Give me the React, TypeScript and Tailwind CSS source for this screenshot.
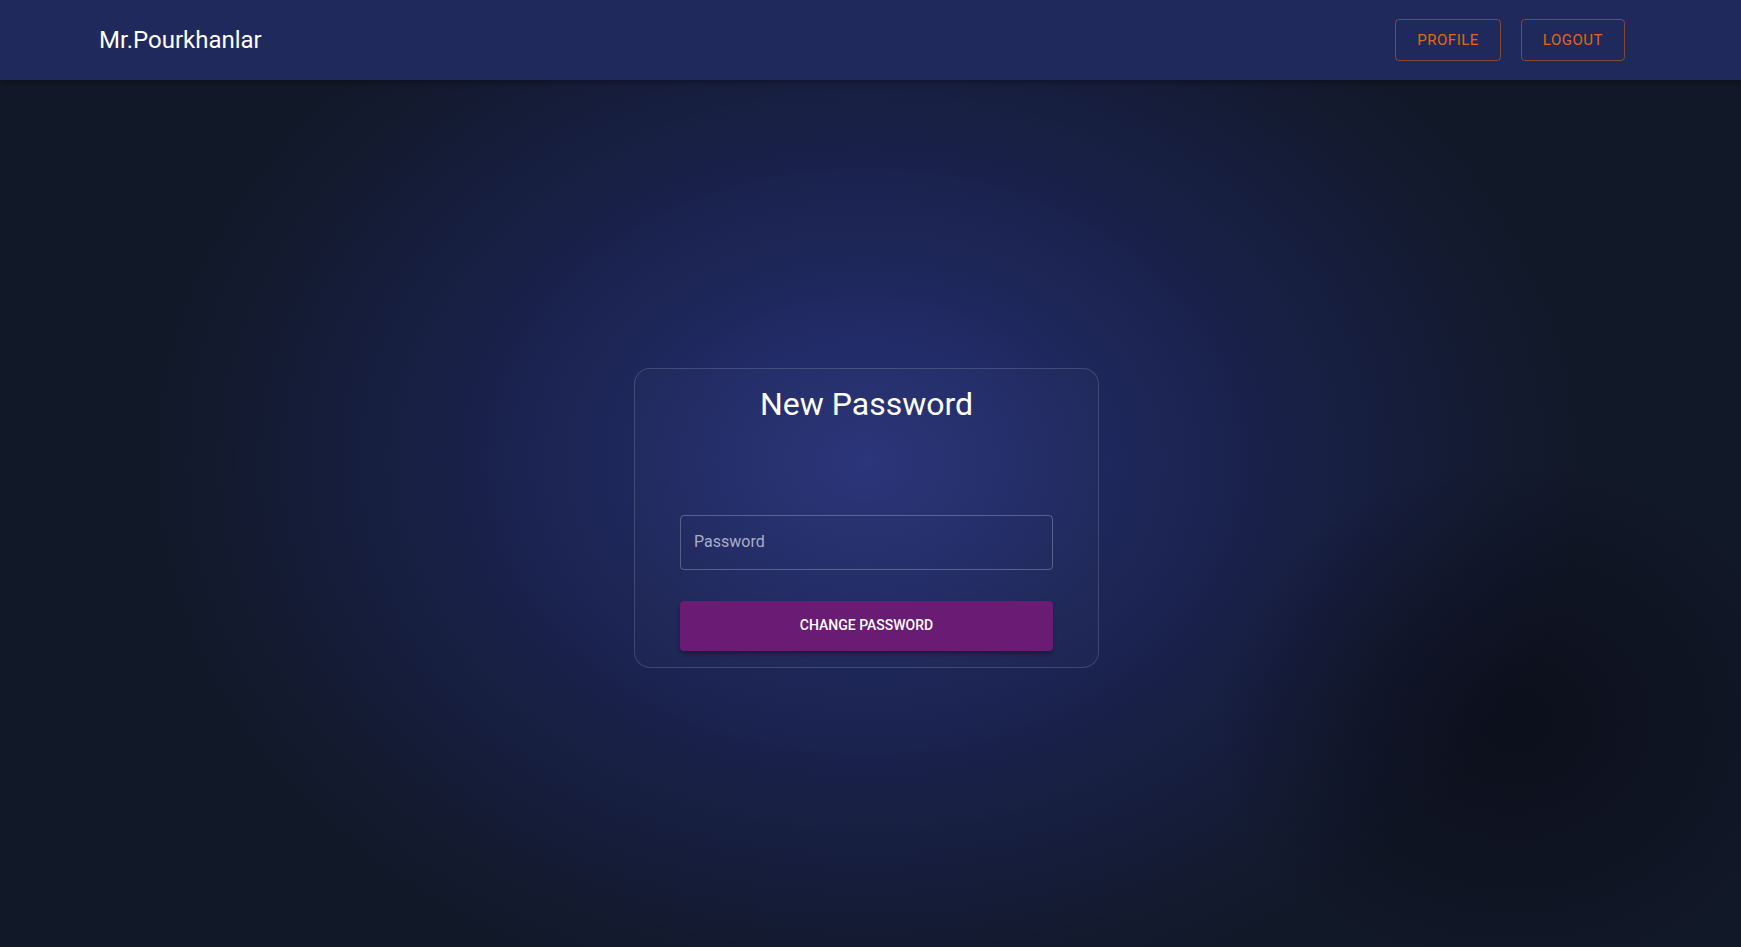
import React from "react";

const font = { fontFamily: "Roboto, 'Noto Sans', Arial, sans-serif" };

function Header() {
  return (
    <header className="relative z-10 h-20 bg-[#1f295c] shadow-[0_2px_6px_rgba(0,0,0,0.35)] flex items-center justify-between pl-[99px] pr-[116px]">
      <h1 className="text-[24px] leading-none text-white font-normal">Mr.Pourkhanlar</h1>
      <nav className="flex items-center gap-5">
        {["Profile", "Logout"].map(label => (
          <button
            key={label}
            className="h-[42px] px-[21px] rounded border border-[#e8650f]/50 text-[#e8650f] text-[15px] font-normal uppercase tracking-[0.5px]"
          >
            {label}
          </button>
        ))}
      </nav>
    </header>
  );
}

export default function App() {
  return (
    <div className="min-h-screen flex flex-col bg-[#111827]" style={font}>
      <Header />
      <main className="flex-1 flex items-center justify-center pt-[9px] pr-[8px] bg-[radial-gradient(ellipse_300px_260px_at_87%_74%,rgba(10,12,24,0.75)_0%,rgba(10,12,24,0)_100%),radial-gradient(ellipse_720px_560px_at_49.7%_44%,#283379_0%,#212a63_25%,#19214a_55%,#111827_100%)]">
        <div className="w-[465px] rounded-2xl border border-white/15 bg-white/[0.015] px-[45px] pt-4 pb-4 flex flex-col">
          <h2 className="text-[32px] leading-[1.2] text-white text-center font-normal">New Password</h2>
          <div className="mt-[91px] h-[55px] rounded border border-white/25 flex items-center px-[13px]">
            <input
              type="password"
              placeholder="Password"
              className="w-full bg-transparent outline-none text-[16px] text-white placeholder:text-[#a9aec6]"
            />
          </div>
          <button className="mt-[31px] h-[50px] rounded bg-[#6a1b74] text-white text-[14px] font-medium uppercase tracking-normal shadow-[0_3px_4px_rgba(0,0,0,0.3)]">
            Change Password
          </button>
        </div>
      </main>
    </div>
  );
}
